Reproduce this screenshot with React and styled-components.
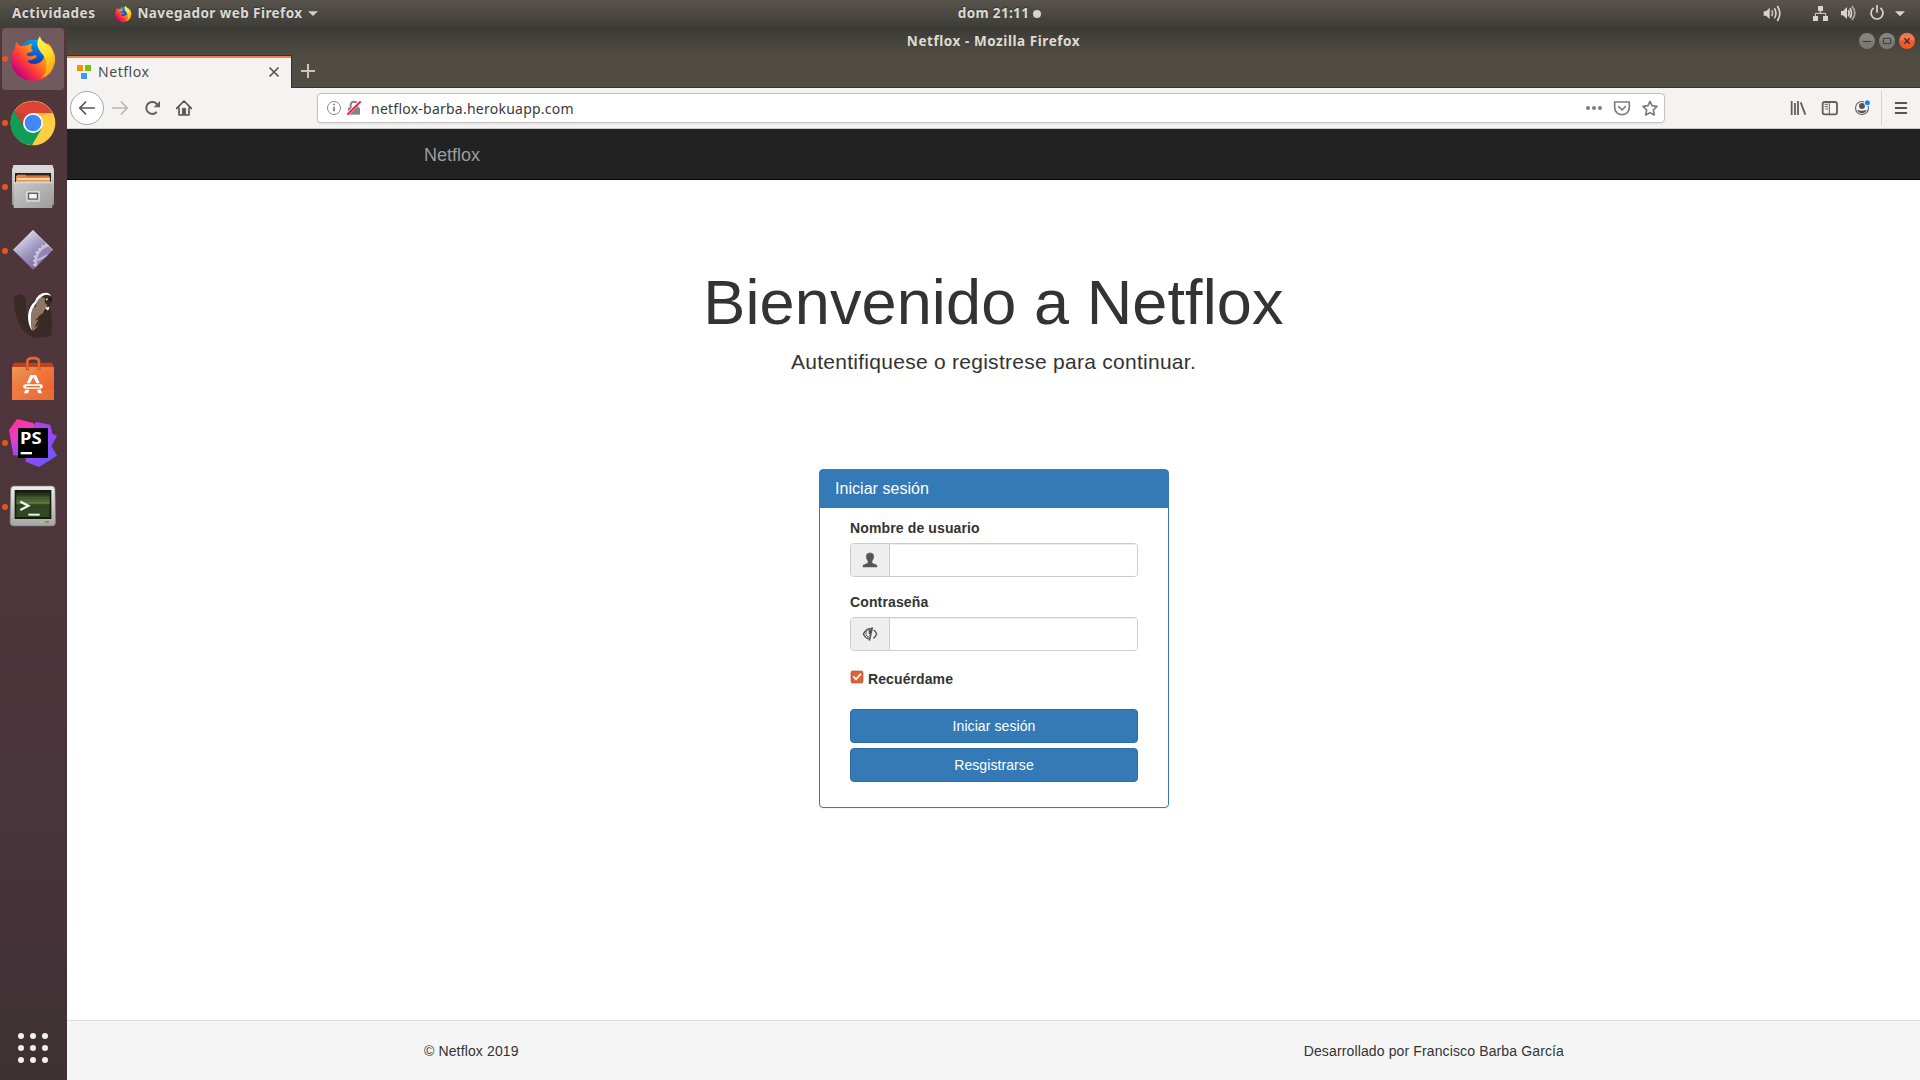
import React from "react";
import styled, { createGlobalStyle } from "styled-components";

const GlobalStyle = createGlobalStyle`
  * { box-sizing: border-box; }
  html, body { margin: 0; padding: 0; height: 100%; overflow: hidden; }
  #root { height: 100%; }
  svg { display: block; }
`;

const UI = `"Noto Sans", "Open Sans", sans-serif`;
const PAGE = `"Liberation Sans", Arial, sans-serif`;

const Desktop = styled.div`
  width: 1920px;
  height: 1080px;
  display: flex;
  flex-direction: column;
  background: #fff;
  font-family: ${UI};
  overflow: hidden;
`;

const TopBar = styled.header`
  display: flex;
  flex: none;
  height: 27px;
  background: linear-gradient(#58544c, #3e3d38);
`;
const TopGroup = styled.div`
  flex: 1 1 0;
  display: flex;
  align-items: center;
  justify-content: ${(p) => (p.$end ? "flex-end" : "flex-start")};
`;
const TopText = styled.span`
  flex: none;
  color: #dbd9d5;
  font-size: 13.5px;
  font-weight: 700;
  line-height: 27px;
  white-space: nowrap;
  letter-spacing: ${(p) => p.$ls || 0}px;
  margin-left: ${(p) => p.$ml || 0}px;
  text-shadow: 0 -1px 1px rgba(0, 0, 0, 0.35);
`;
const ClockDot = styled.i`
  width: 8px;
  height: 8px;
  border-radius: 50%;
  background: #d6d4cf;
  margin-left: 4px;
`;
const Art = styled.svg`
  flex: none;
  width: ${(p) => p.$w}px;
  height: ${(p) => p.$h}px;
  margin-left: ${(p) => p.$ml || 0}px;
  margin-right: ${(p) => p.$mr || 0}px;
`;

const Body = styled.div`
  flex: 1;
  display: flex;
  min-height: 0;
`;
const Dock = styled.nav`
  width: 67px;
  flex: none;
  display: flex;
  flex-direction: column;
  padding: 1px 3px 7px 2px;
  gap: 2px;
  background: linear-gradient(#50373a 0%, #4f363b 20%, #4c343b 60%, #46333a 84%, #3f3235 95%, #3d3133 100%);
`;
const DockItem = styled.div`
  display: flex;
  align-items: center;
  width: 62px;
  height: 62px;
  border-radius: 4px;
  background: ${(p) => (p.$active ? "#705a5e" : "transparent")};
`;
const Running = styled.i`
  width: 6px;
  height: 6px;
  flex: none;
  border-radius: 50%;
  margin: 0 1px 0 0;
  background: ${(p) => (p.$on ? "#e95420" : "transparent")};
`;
const Apps = styled.div`
  margin: auto auto 10px 16px;
  display: grid;
  grid-template-columns: repeat(3, 6px);
  gap: 6px;
`;
const AppDot = styled.i`
  width: 6px;
  height: 6px;
  border-radius: 50%;
  background: #f2f0f0;
`;

const Window = styled.main`
  flex: 1;
  display: flex;
  flex-direction: column;
  min-width: 0;
`;
const TitleBar = styled.div`
  display: flex;
  align-items: center;
  height: 28px;
  padding: 0 5px;
  background: linear-gradient(#3b3a36, #504c44);
`;
const TitleSide = styled.div`
  flex: 1 1 0;
  display: flex;
  justify-content: flex-end;
  gap: 4px;
`;
const Title = styled.span`
  color: #dfdbd2;
  font-size: 13.5px;
  font-weight: 700;
  white-space: nowrap;
  line-height: 28px;
  letter-spacing: 0.56px;
`;
const TabStrip = styled.div`
  display: flex;
  height: 33px;
  background: #504c44;
  box-shadow: inset 0 -1px #35332f;
`;
const Tab = styled.div`
  width: 225px;
  display: flex;
  align-items: center;
  background: #f4f3f2;
  border-top: 1px solid #35332f;
  border-right: 1px solid #35332f;
  box-shadow: inset 0 2px #f0804f;
  padding: 0 11px 0 10px;
`;
const TabLabel = styled.span`
  flex: 1;
  margin-left: 7px;
  font-size: 14px;
  color: #4c4c4c;
  line-height: 20px;
  letter-spacing: 0.55px;
`;
const Toolbar = styled.div`
  display: flex;
  height: 41px;
  background: #f4f3f2;
  border-bottom: 1px solid #cbc9c6;
`;
const Address = styled.div`
  display: flex;
  align-items: center;
  width: 1348px;
  height: 30px;
  margin: 5px 0 0 123px;
  padding-right: 4px;
  border: 1px solid #c4c2bf;
  border-radius: 4px;
  background: #fff;
  box-shadow: 0 1px 2px rgba(0, 0, 0, 0.08);
`;
const Url = styled.span`
  flex: 1;
  margin-left: 9px;
  padding-top: 1px;
  font-size: 14px;
  color: #3a3a3a;
  line-height: 28px;
  letter-spacing: 0.24px;
  white-space: nowrap;
`;
const Separator = styled.i`
  width: 1px;
  height: 34px;
  margin: 3px 0 0 10px;
  background: #d5d3d1;
`;

const Navbar = styled.div`
  display: flex;
  justify-content: center;
  height: 51px;
  padding-left: 1px;
  background: #222;
  border-bottom: 1px solid #080808;
  font-family: ${PAGE};
`;
const Container = styled.div`
  width: 1170px;
  padding: 0 15px;
  display: flex;
  justify-content: space-between;
  align-items: center;
`;
const Brand = styled.span`
  padding-top: 2px;
  font-size: 18px;
  line-height: 20px;
  color: #9d9d9d;
`;
const Content = styled.div`
  flex: 1;
  display: flex;
  flex-direction: column;
  align-items: center;
  padding-left: 1px;
  font-family: ${PAGE};
  color: #333;
`;
const Headline = styled.h1`
  margin: 88px 1px 0 0;
  font-size: 63px;
  font-weight: 500;
  line-height: 69px;
  letter-spacing: 0.12px;
`;
const Lead = styled.p`
  margin: 10px 1px 0 0;
  font-size: 21px;
  line-height: 30px;
  letter-spacing: 0.27px;
`;
const Panel = styled.section`
  width: 350px;
  height: 339px;
  margin-top: 92px;
  border: 1px solid #337ab7;
  border-radius: 4px;
  box-shadow: 0 1px 1px rgba(0, 0, 0, 0.05);
`;
const PanelHead = styled.div`
  height: 38px;
  padding: 0 15px;
  background: #337ab7;
  color: #fff;
  font-size: 16px;
  line-height: 37px;
  letter-spacing: 0.04px;
`;
const Form = styled.form`
  display: flex;
  flex-direction: column;
  padding: 10px 30px 0;
`;
const Label = styled.label`
  font-size: 14px;
  font-weight: 700;
  line-height: 20px;
  margin-bottom: 5px;
  letter-spacing: 0.13px;
`;
const InputGroup = styled.div`
  display: flex;
  height: 34px;
  margin-bottom: 15px;
  border: 1px solid #ccc;
  border-radius: 4px;
  overflow: hidden;
`;
const Addon = styled.span`
  width: 39px;
  display: flex;
  align-items: center;
  justify-content: center;
  background: #eee;
  border-right: 1px solid #ccc;
`;
const Input = styled.input`
  flex: 1;
  border: 0;
  outline: 0;
  padding: 0 12px;
  background: #fff;
  box-shadow: inset 0 1px 1px rgba(0, 0, 0, 0.075);
`;
const Remember = styled.label`
  display: flex;
  align-items: flex-start;
  height: 20px;
  margin: 3px 0 20px;
  font-size: 14px;
  font-weight: 700;
  line-height: 20px;
  letter-spacing: 0.1px;
`;
const Button = styled.button`
  height: 34px;
  margin: 0 0 5px;
  padding: 0;
  border: 1px solid #2e6da4;
  border-radius: 4px;
  background: #337ab7;
  color: #fff;
  font: 14px/20px ${PAGE};
  letter-spacing: 0.08px;
`;
const Footer = styled.footer`
  display: flex;
  justify-content: center;
  height: 60px;
  padding-left: 1px;
  background: #f5f5f5;
  border-top: 1px solid #ddd;
  font: 14px/20px ${PAGE};
  letter-spacing: 0.13px;
  color: #333;
`;

const Firefox = ({ w, h, ml, id }) => (
  <Art $w={w} $h={h} $ml={ml} viewBox="27 45 144 144">
    <defs>
      <linearGradient id={id + "b"} x1=".85" y1=".2" x2=".15" y2=".8">
        <stop offset="0" stopColor="#ffb21c" /><stop offset=".35" stopColor="#ff8a16" />
        <stop offset=".65" stopColor="#ff3b3c" /><stop offset="1" stopColor="#c8047c" />
      </linearGradient>
      <linearGradient id={id + "g"} x1=".6" y1="0" x2=".4" y2="1">
        <stop offset="0" stopColor="#00a4f8" /><stop offset=".55" stopColor="#0657d2" /><stop offset="1" stopColor="#3b1a75" />
      </linearGradient>
      <linearGradient id={id + "f"} x1=".2" y1="0" x2=".7" y2="1">
        <stop offset="0" stopColor="#fff45a" /><stop offset=".5" stopColor="#ffdd2c" /><stop offset="1" stopColor="#ff980e" />
      </linearGradient>
    </defs>
    <circle cx="102" cy="105" r="46" fill={`url(#${id}g)`} />
    <path d="M50 66Q54 76 62 79Q70 76 80 77Q87 70 98 71Q91 79 94 86L99 92Q93 98 82 99L80 105Q89 112 99 107Q109 104 110 110Q105 117 94 119Q80 120 84 126C95 137 122 132 130 116Q137 99 126 88L144 70Q158 83 165 109C166 148 142 183 100 183C61 183 33 153 33 121Q33 103 45 85Q45 74 50 66Z" fill={`url(#${id}b)`} />
    <path d="M120 48Q121 62 139 71Q161 86 165 116C165 146 147 168 124 173Q143 158 139 134Q141 118 130 106Q113 88 112 72Q112 58 120 48Z" fill={`url(#${id}f)`} />
  </Art>
);
const Chrome = () => (
  <Art $w={48} $h={48} viewBox="27 237 144 144">
    <circle cx="99" cy="309" r="67" fill="#ffce41" />
    <path d="M42 275A67 67 0 0 1 158 279H99L73 324Z" fill="#dc4437" />
    <path d="M43 272A67 67 0 0 0 96 376L126 324L99 338Q78 335 70 316Z" fill="#109d58" />
    <path d="M42 273L71 322 72 300 80 286Z" fill="#b9352d" opacity=".45" />
    <path d="M99 279H158L126 288Z" fill="#c99d28" opacity=".4" />
    <circle cx="99" cy="309" r="30" fill="#fff" /><circle cx="99" cy="309" r="25" fill="#4387f5" />
  </Art>
);
const Files = () => (
  <Art $w={48} $h={48} viewBox="27 429 144 144">
    <defs>
      <linearGradient id="fl" x2="0" y2="1"><stop stopColor="#e6e6e6" /><stop offset="1" stopColor="#8f8f8f" /></linearGradient>
      <linearGradient id="fd" x2="1" y2="1"><stop stopColor="#c9c9c9" /><stop offset="1" stopColor="#9d9d9d" /></linearGradient>
    </defs>
    <path d="M41 435H157L162 452V555H36V452Z" fill="url(#fl)" />
    <path d="M41 435H157L162 449H36Z" fill="#d9d9d9" />
    <path d="M45 459H153V488H45Z" fill="#2c211e" />
    <path d="M48 469L53 464H76L80 468H147L150 471V488H48Z" fill="#e8843a" />
    <path d="M78 465H147V469H78Z" fill="#c14417" /><path d="M51 475H149V479H51Z" fill="#fff3df" />
    <path d="M48 482H151V487H48Z" fill="#f6b765" />
    <path d="M41 487H157V564H41Z" fill="url(#fd)" /><path d="M41 487H157V490H41Z" fill="#e0e0e0" />
    <rect x="78" y="513" width="42" height="32" rx="5" fill="#dcdcdc" />
    <rect x="82" y="517" width="34" height="24" rx="3" fill="#b0b0b0" />
    <rect x="86" y="520" width="26" height="17" fill="#f5f5f5" stroke="#4a4a4a" strokeWidth="3" />
  </Art>
);
const Gear = () => (
  <Art $w={48} $h={48} viewBox="27 621 144 144">
    <defs>
      <linearGradient id="gd" x1=".2" y1=".1" x2=".8" y2=".9"><stop stopColor="#dedcf0" /><stop offset=".5" stopColor="#9c94bd" /><stop offset="1" stopColor="#77608f" /></linearGradient>
      <clipPath id="gc"><path d="M99 630L159 690 99 750 39 690Z" /></clipPath>
    </defs>
    <g clipPath="url(#gc)">
      <path d="M99 630L159 690 99 750 39 690Z" fill="url(#gd)" />
      <circle cx="160" cy="726" r="53" fill="#9483ae" stroke="#c6c0da" strokeWidth="8" />
      <circle cx="160" cy="726" r="58" fill="none" stroke="#cfcae1" strokeWidth="6" strokeDasharray="6 7" />
      <path d="M112 721L146 704" stroke="#c6c0da" strokeWidth="5" />
    </g>
    <path d="M40 690L99 631 158 690" fill="none" stroke="#e9e7f6" strokeWidth="2" />
    <path d="M40 691L99 749 158 691" fill="none" stroke="#5d4a7a" strokeWidth="2" />
  </Art>
);
const Beaver = () => (
  <Art $w={48} $h={48} viewBox="27 33 144 144">
    <path d="M42 60Q43 43 61 44Q77 45 79 63Q77 84 82 104Q83 76 104 60L118 45Q137 34 153 47Q158 53 155 65L149 77Q160 111 154 159L155 169Q128 173 110 174C70 169 44 124 42 60Z" fill="#392a25" />
    <path d="M96 152C78 125 80 84 105 64Q113 38 139 38Q151 41 153 47L140 44Q125 45 117 60C93 84 90 112 96 152Z" fill="#fff" />
    <path d="M116 57Q128 47 136 57Q129 66 142 75L140 83Q130 89 128 105Q121 137 98 154Q87 109 98 85Q104 80 108 80Q107 68 116 57Z" fill="#8e7767" />
    <path d="M135 83L149 80 144 92Z" fill="#fff" /><path d="M145 53H156V63H146Z" fill="#211815" />
    <path d="M137 57L144 55 141 62Z" fill="#fff" /><path d="M120 105L105 122 116 118 102 143Q128 132 136 97Z" fill="#392a25" />
  </Art>
);
const Software = () => (
  <Art $w={48} $h={48} viewBox="27 225 144 144">
    <defs><linearGradient id="sw" x1="0" y1="0" x2=".8" y2="1"><stop stopColor="#e99a5b" /><stop offset=".5" stopColor="#f0743a" /><stop offset="1" stopColor="#e9612b" /></linearGradient></defs>
    <path d="M42 248H156L162 262H36Z" fill="#b9441c" />
    <path d="M36 261H162V360H36Z" fill="url(#sw)" /><path d="M36 329H162V360H36Z" fill="#fff" opacity=".06" />
    <path d="M82 271V246Q82 234 95 234H104Q117 234 117 246V271" fill="none" stroke="#c64a21" strokeWidth="9" />
    <path d="M82 269V246Q82 235 95 235H104Q117 235 117 246V269" fill="none" stroke="#e8713f" strokeWidth="5" />
    <path d="M91 285H108L119 310H109L100 291 90 310H80Z" fill="#fff" />
    <path d="M76 313H122A4 4 0 0 1 122 326H76A4 4 0 0 1 76 313Z" fill="#fff" /><path d="M79 318H120V322H79Z" fill="#ed6c35" />
    <path d="M76 329H88L84 340H72ZM111 329H122L126 340H115Z" fill="#fff" />
  </Art>
);
const PhpStorm = () => (
  <Art $w={48} $h={48} viewBox="27 417 144 144">
    <defs>
      <linearGradient id="pa" x2=".4" y2="1"><stop stopColor="#ff318c" /><stop offset=".45" stopColor="#f43ac1" /><stop offset="1" stopColor="#8b4df8" /></linearGradient>
      <linearGradient id="pb" x2=".7" y2="1"><stop stopColor="#c336e9" /><stop offset=".5" stopColor="#9a48f4" /><stop offset="1" stopColor="#6b57ff" /></linearGradient>
    </defs>
    <path d="M51 417L100 429 116 454 80 528 40 526 27 451Z" fill="url(#pa)" />
    <path d="M108 426L151 434 157 461 171 468 154 498 171 527 117 561 77 545 75 480Z" fill="url(#pb)" />
    <path d="M54 444H144V534H54Z" fill="#000" /><path d="M62 516H96V523H62Z" fill="#fff" />
    <text x="60" y="493" fill="#fff" fontFamily="Noto Sans, sans-serif" fontWeight="700" fontSize="48" textLength="65" lengthAdjust="spacingAndGlyphs">PS</text>
  </Art>
);
const Terminal = () => (
  <Art $w={48} $h={48} viewBox="27 609 144 144">
    <defs>
      <linearGradient id="ta" x2="0" y2="1"><stop stopColor="#eeeeec" /><stop offset="1" stopColor="#a5a6a2" /></linearGradient>
      <linearGradient id="tb" x2="0" y2="1"><stop stopColor="#1d2a17" /><stop offset=".45" stopColor="#58733e" /><stop offset=".5" stopColor="#2d4421" /><stop offset="1" stopColor="#304a22" /></linearGradient>
    </defs>
    <path d="M42 618H155Q164 618 165 628L167 725Q167 738 156 738H42Q30 738 30 725L32 628Q33 618 42 618Z" fill="url(#ta)" stroke="#777" strokeWidth="2" />
    <path d="M44 630H154V717H44Z" fill="#171b14" /><path d="M49 637H149V711H49Z" fill="url(#tb)" />
    <path d="M49 652H149M49 660H149M49 668H149" stroke="#799456" opacity=".5" strokeWidth="2" />
    <path d="M61 665L85 677 61 690" fill="none" stroke="#eaf5e4" strokeWidth="7" /><path d="M85 704H119" stroke="#eaf5e4" strokeWidth="6" />
    <path d="M122 723H129V729H122Z" fill="#8ae234" /><path d="M135 723H147V729H135Z" fill="#888" />
  </Art>
);

const dock = [
  { name: "firefox", on: true, active: true, icon: <Firefox w={48} h={48} id="dock" /> },
  { name: "chrome", on: true, icon: <Chrome /> },
  { name: "files", on: true, icon: <Files /> },
  { name: "gear", on: true, icon: <Gear /> },
  { name: "beaver", on: false, icon: <Beaver /> },
  { name: "software", on: false, icon: <Software /> },
  { name: "phpstorm", on: true, icon: <PhpStorm /> },
  { name: "terminal", on: true, icon: <Terminal /> },
];

const TopIcons = () => (
  <>
    <Art $w={22} $h={27} viewBox="606 0 66 81" fill="none" stroke="#d8d5ce" strokeWidth="5">
      <path d="M611 34H618L629 23V57L618 47H611Z" fill="#d8d5ce" stroke="none" />
      <path d="M635 31Q641 40 635 49" opacity=".8" /><path d="M643 25Q653 40 643 55" /><path d="M652 18Q667 40 652 63" />
    </Art>
    <Art $w={19} $h={27} $ml={27} viewBox="753 0 57 81" fill="#d8d5ce">
      <path d="M774 18H789V33H774ZM759 48H774V63H759ZM789 48H804V63H789Z" />
      <path d="M781 32V41M766 49V40H797V49" fill="none" stroke="#d8d5ce" strokeWidth="3" />
    </Art>
    <Art $w={19} $h={27} $ml={9} viewBox="837 0 57 81" fill="none" stroke="#d8d5ce" strokeWidth="5">
      <path d="M843 33H849L861 21V57L849 46H843Z" fill="#d8d5ce" stroke="none" />
      <path d="M865 30Q870 39 865 49" /><path d="M870 24Q879 39 870 54" /><path d="M876 18Q893 39 876 60" opacity=".7" />
    </Art>
    <Art $w={18} $h={27} $ml={10} viewBox="924 0 54 81" fill="none" stroke="#d8d5ce" strokeWidth="5">
      <path d="M941 24A18 18 0 1 0 961 24M951 15V38" />
    </Art>
    <Art $w={12} $h={27} $ml={8} $mr={14} viewBox="1002 0 36 81"><path d="M1005 34H1035L1020 49Z" fill="#d8d5ce" /></Art>
  </>
);

const WindowButtons = () => (
  <>
    {[921, 981, 1041].map((x, i) => (
      <Art key={x} $w={16} $h={20} viewBox={`${x - 24} 93 48 60`}>
        <circle cx={x} cy="123" r="24" fill={i === 2 ? "#ee5b2b" : "#7c7a74"} />
        <path d={`M${x - 23} 121A23 23 0 0 1 ${x + 23} 121Z`} fill="#fff" opacity={i === 2 ? 0.18 : 0.08} />
        {i === 0 && <path d="M909 124.500H933" stroke="#3c3b37" strokeWidth="3" />}
        {i === 1 && <path d="M970 115H992V131H970Z" fill="none" stroke="#3c3b37" strokeWidth="3" />}
        {i === 2 && <path d="M1033 115L1049 131M1049 115L1033 131" stroke="#4b281c" strokeWidth="4" />}
      </Art>
    ))}
  </>
);

export default function App() {
  return (
    <Desktop>
      <GlobalStyle />
      <TopBar>
        <TopGroup>
          <TopText $ml={12} $ls={0.5}>Actividades</TopText>
          <Firefox w={18} h={18} ml={19} id="top" />
          <TopText $ml={5} $ls={0.43}>Navegador web Firefox</TopText>
          <Art $w={12} $h={27} $ml={4} viewBox="918 0 36 81"><path d="M921 34H951L936 48Z" fill="#d0cec9" /></Art>
        </TopGroup>
        <TopText $ml={67} $ls={0.35}>dom 21:11</TopText>
        <TopGroup>
          <ClockDot />
          <TopGroup $end><TopIcons /></TopGroup>
        </TopGroup>
      </TopBar>
      <Body>
        <Dock>
          {dock.map((d) => (
            <DockItem key={d.name} $active={d.active}><Running $on={d.on} />{d.icon}</DockItem>
          ))}
          <Apps>{Array.from({ length: 9 }, (_, i) => <AppDot key={i} />)}</Apps>
        </Dock>
        <Window>
          <TitleBar>
            <TitleSide />
            <Title>Netflox - Mozilla Firefox</Title>
            <TitleSide><WindowButtons /></TitleSide>
          </TitleBar>
          <TabStrip>
            <Tab>
              <Art $w={14} $h={14} viewBox="0 0 14 14"><path d="M0 0H6V6H0Z" fill="#ff8d00" /><path d="M8 0H14V6H8Z" fill="#72c600" /><path d="M4 8H10V14H4Z" fill="#4496f0" /></Art>
              <TabLabel>Netflox</TabLabel>
              <Art $w={12} $h={12} viewBox="0 0 12 12"><path d="M1.500 1.500L10.500 10.500M10.500 1.500L1.500 10.500" stroke="#555" strokeWidth="1.700" /></Art>
            </Tab>
            <Art $w={16} $h={32} $ml={8} viewBox="0 0 16 32"><path d="M8 9V23M1 16H15" stroke="#c9c6c0" strokeWidth="2" /></Art>
          </TabStrip>
          <Toolbar>
            <Art $w={34} $h={40} $ml={3} viewBox="210 264 102 120" fill="none" stroke="#555" strokeWidth="5" strokeLinecap="round" strokeLinejoin="round">
              <circle cx="261" cy="324" r="49.500" fill="#fff" stroke="#a9a7a5" strokeWidth="3" /><path d="M283 324H240M257 306L239 324 257 342" />
            </Art>
            <Art $w={20} $h={40} $ml={6} viewBox="330 264 60 120" fill="none" stroke="#b9b8b6" strokeWidth="5" strokeLinecap="round" strokeLinejoin="round"><path d="M338 324H381M364 306L382 324 364 342" /></Art>
            <Art $w={20} $h={40} $ml={12} viewBox="426 264 60 120" fill="none" stroke="#606060" strokeWidth="6"><path d="M472 314A18 18 0 1 0 470 336" /><path d="M480 303V322H461Z" fill="#606060" stroke="none" /></Art>
            <Art $w={20} $h={40} $ml={12} viewBox="522 264 60 120" fill="none" stroke="#555" strokeWidth="5" strokeLinejoin="round" strokeLinecap="round"><path d="M530 325L552 303 574 325M537 324V345H567V324" /><path d="M547 344V325H557V344" fill="#555" strokeWidth="2" /></Art>
            <Address>
              <Art $w={16} $h={28} $ml={8} viewBox="978 282 48 84"><circle cx="1002" cy="324" r="19.500" fill="none" stroke="#8b8b8b" strokeWidth="3" /><path d="M1002 320V334M1002 311V316" stroke="#777" strokeWidth="5" /></Art>
              <Art $w={16} $h={28} $ml={4} viewBox="1038 282 48 84"><path d="M1044 323H1080V344H1044Z" fill="#858585" /><path d="M1052 324V314Q1053 305 1062 305Q1072 305 1072 315V324" fill="none" stroke="#858585" strokeWidth="6" /><path d="M1041 344L1083 302" stroke="#fff" strokeWidth="9" /><path d="M1042 344L1082 304" stroke="#ff0a3d" strokeWidth="5.500" /></Art>
              <Url>netflox-barba.herokuapp.com</Url>
              <Art $w={20} $h={28} viewBox="72 282 60 84" fill="#7d7d7d"><circle cx="84" cy="324" r="6" /><circle cx="102" cy="324" r="6" /><circle cx="120" cy="324" r="6" /></Art>
              <Art $w={20} $h={28} $ml={8} viewBox="156 282 60 84" fill="none" stroke="#7d7d7d" strokeWidth="5" strokeLinejoin="round" strokeLinecap="round"><path d="M164 306H208V322C208 351 164 351 164 322Z" /><path d="M176 320L186 330 196 320" /></Art>
              <Art $w={20} $h={28} $ml={8} viewBox="240 282 60 84" fill="none" stroke="#7d7d7d" strokeWidth="5" strokeLinejoin="round"><path d="M270 304L276 317 291 319 280 330 283 345 270 338 257 345 260 330 249 319 264 317Z" /></Art>
            </Address>
            <Art $w={18} $h={40} $ml={124} viewBox="687 264 54 120" stroke="#606060" strokeWidth="5.500"><path d="M695 303V345M705 309V345M714 303V345M722 307L736 344" /></Art>
            <Art $w={18} $h={40} $ml={14} viewBox="783 264 54 120" fill="none" stroke="#606060" strokeWidth="5.500"><rect x="788" y="306" width="43" height="37" rx="6" /><path d="M808 306V343" strokeWidth="3" /><path d="M794 313H804M794 320H804M796 327H804" strokeWidth="3" /></Art>
            <Art $w={18} $h={40} $ml={14} viewBox="879 264 54 120"><circle cx="906" cy="324" r="19.500" fill="none" stroke="#666" strokeWidth="3.500" /><circle cx="906" cy="318" r="9" fill="#555" /><path d="M892 329Q906 335 920 329Q917 339 906 340Q895 339 892 329Z" fill="#555" /><circle cx="922" cy="308" r="10" fill="#f4f3f2" /><circle cx="922" cy="308" r="7.500" fill="#0a84ff" /></Art>
            <Separator />
            <Art $w={16} $h={40} $ml={11} viewBox="999 264 48 120" stroke="#555" strokeWidth="5.500" strokeLinecap="round"><path d="M1007 309H1039M1007 324H1039M1007 339H1039" /></Art>
          </Toolbar>
          <Navbar><Container><Brand>Netflox</Brand></Container></Navbar>
          <Content>
            <Headline>Bienvenido a Netflox</Headline>
            <Lead>Autentifiquese o registrese para continuar.</Lead>
            <Panel>
              <PanelHead>Iniciar sesión</PanelHead>
              <Form>
                <Label>Nombre de usuario</Label>
                <InputGroup>
                  <Addon><Art $w={16} $h={16} viewBox="156 276 48 48"><path d="M159 321V316L174 309V303Q169 298 169 290Q168 279 180 279Q192 279 191 290Q191 298 186 303V309L201 316V321Z" fill="#555" stroke="#555" strokeWidth="1.500" /></Art></Addon>
                  <Input />
                </InputGroup>
                <Label>Contraseña</Label>
                <InputGroup>
                  <Addon><Art $w={16} $h={16} viewBox="156 498 48 48" fill="none" stroke="#555" strokeWidth="5"><path d="M186 507Q170 503 160 522Q166 534 176 537M191 510Q198 515 200 522Q197 531 190 535" strokeWidth="4" /><path d="M187 502L178 542" /><path d="M169 513Q164 526 177 532" strokeWidth="3" /><path d="M176 509L186 508 182 525Q174 523 176 509Z" fill="#555" stroke="none" /></Art></Addon>
                  <Input type="password" />
                </InputGroup>
                <Remember>
                  <Art $w={14} $h={18} $mr={4} viewBox="120 57 42 54"><rect x="123" y="63" width="36" height="36" rx="5" fill="#dc6338" stroke="#a95232" strokeWidth="2" /><path d="M130 79L138 88 153 71" fill="none" stroke="#fff" strokeWidth="5" /></Art>
                  Recuérdame
                </Remember>
                <Button type="button">Iniciar sesión</Button>
                <Button type="button">Resgistrarse</Button>
              </Form>
            </Panel>
          </Content>
          <Footer><Container><span>© Netflox 2019</span><span>Desarrollado por Francisco Barba García</span></Container></Footer>
        </Window>
      </Body>
    </Desktop>
  );
}
